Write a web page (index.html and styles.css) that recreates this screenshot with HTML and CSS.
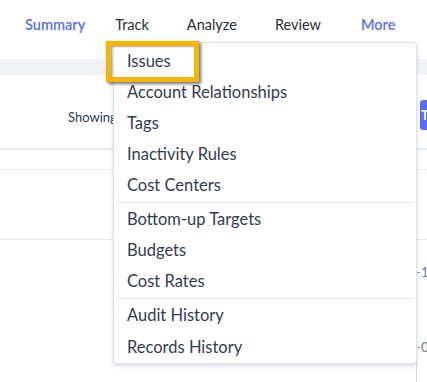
FILE: index.html
```html
<!DOCTYPE html>
<html>
<head>
<meta charset="utf-8">
<link rel="stylesheet" href="styles.css">
</head>
<body>
<div class="page">
  <nav class="nav">
    <a class="nav-item active summary">Summary</a>
    <a class="nav-item">Track</a>
    <a class="nav-item">Analyze</a>
    <a class="nav-item">Review</a>
    <a class="nav-item active">More</a>
  </nav>
  <div class="band"></div>
  <div class="toolbar">
    <span class="showing">Showing 1 of 1</span>
    <button class="btn">Th</button>
  </div>
  <div class="rule thick"></div>
  <div class="row r1"></div>
  <div class="rule"></div>
  <div class="row r2"></div>
  <div class="rule"></div>
  <div class="chart">
    <div class="axis">
      <div class="tick t1"><i></i><span>1</span></div>
      <div class="tick t0"><i></i><span>0</span></div>
    </div>
  </div>

  <div class="menu">
    <div class="menu-group">
      <div class="menu-item highlighted">Issues<span class="callout"></span></div>
      <div class="menu-item">Account Relationships</div>
      <div class="menu-item">Tags</div>
      <div class="menu-item">Inactivity Rules</div>
      <div class="menu-item">Cost Centers</div>
    </div>
    <div class="menu-sep"></div>
    <div class="menu-group">
      <div class="menu-item">Bottom-up Targets</div>
      <div class="menu-item">Budgets</div>
      <div class="menu-item">Cost Rates</div>
    </div>
    <div class="menu-sep"></div>
    <div class="menu-group last">
      <div class="menu-item">Audit History</div>
      <div class="menu-item">Records History</div>
    </div>
  </div>
</div>
</body>
</html>
```

FILE: styles.css
```css
* { box-sizing: border-box; }
html, body { margin: 0; padding: 0; background: #fff; }
body {
  width: 427px;
  height: 382px;
  overflow: hidden;
  font-family: Lato, "Open Sans", sans-serif;
}
.page { position: relative; width: 427px; height: 382px; overflow: hidden; }

.nav {
  height: 59px;
  display: flex;
  align-items: flex-start;
  padding: 16px 0 0 25px;
  gap: 38px;
  font-size: 14.5px;
}
.nav-item { color: #2b2d33; white-space: nowrap; }
.nav-item.active { color: #5a6ff2; font-weight: 600; }
.nav-item.summary { margin-right: -8px; }
.nav-item:last-child { margin-left: 2px; }

.band { height: 16px; background: #f1f2f5; }

.toolbar {
  height: 73px;
  display: flex;
  align-items: flex-start;
  padding: 25px 0 0 68px;
}
.showing {
  font-size: 13px;
  color: #2c3a56;
  line-height: 30px;
  padding-top: 2px;
  white-space: nowrap;
}
.btn {
  margin-left: auto;
  margin-right: -63px;
  flex: none;
  height: 30px;
  width: 70px;
  border: 0;
  border-radius: 3px;
  background: #5a6cf4;
  color: #fff;
  font: 700 13px Lato, sans-serif;
  text-align: left;
  padding-left: 1px;
}

.rule { height: 1px; background: #e6e9ef; }
.rule.thick { height: 2px; background: #e3e8f2; }
.row.r1 { height: 19px; }
.row.r2 { height: 69px; }

.chart { height: 143px; display: flex; justify-content: flex-end; }
.axis {
  position: relative;
  width: 11px;
  height: 100%;
  border-left: 1px solid #d7dae0;
}
.tick { position: absolute; left: 0; display: flex; align-items: center; gap: 1px; }
.tick i { display: block; width: 3px; height: 1px; background: #9aa2b3; }
.tick span { font-size: 13px; color: #6f7c97; line-height: 14px; }
.tick.t1 { top: 25px; }
.tick.t0 { top: 100px; }

.menu {
  position: absolute;
  left: 113px;
  top: 42px;
  width: 304px;
  height: 322px;
  background: #fff;
  border: 1px solid #dfe3ec;
  border-radius: 4px;
  box-shadow: 0 2px 4px rgba(40, 50, 70, 0.18);
  padding: 3px 2px 0 2px;
}
.menu-item {
  position: relative;
  height: 31px;
  line-height: 31px;
  padding-left: 11px;
  font-size: 16.5px;
  color: #343b51;
  white-space: nowrap;
}
.menu-group.last .menu-item { height: 31.5px; line-height: 31.5px; }
.menu-sep { height: 1px; margin: 1px 0; background: #e4e7ee; }

.callout {
  position: absolute;
  left: -10px;
  top: -5px;
  width: 93px;
  height: 41px;
  border: 5px solid #f6b500;
  box-shadow: 2px 2px 3px rgba(0, 0, 0, 0.55), inset 1px 1px 2px rgba(0, 0, 0, 0.35);
}
```
